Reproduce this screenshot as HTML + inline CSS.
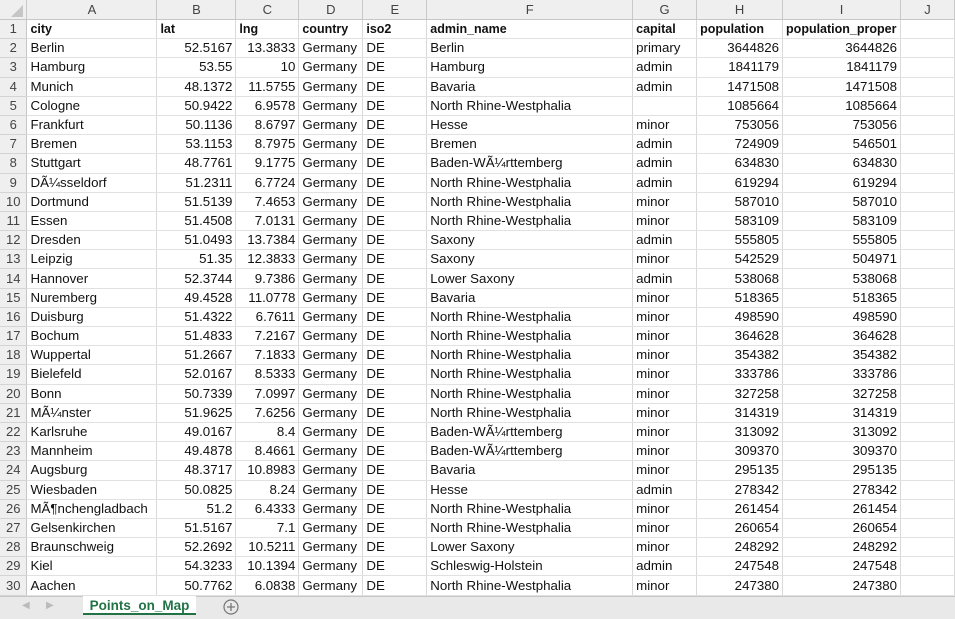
<!DOCTYPE html>
<html><head><meta charset="utf-8"><style>
html,body{margin:0;padding:0;width:955px;height:618px;overflow:hidden;background:#fff;font-family:"Liberation Sans",sans-serif;}
table{border-collapse:collapse;table-layout:fixed;position:absolute;left:0;top:0;}
td{height:18.2px;padding:0 3px;border-right:1px solid #d9d9d9;border-bottom:1px solid #e1e1e1;font-size:13.3px;color:#111;white-space:nowrap;overflow:hidden;line-height:18px;}
td.n{text-align:right;}
tr.h td{height:19px;background:#efefef;color:#444;text-align:center;border-right:1px solid #c9c9c9;border-bottom:1px solid #c6c6c6;font-size:13px;}
td.r{background:#efefef;color:#444;text-align:center;border-right:1px solid #c6c6c6;border-bottom:1px solid #d4d4d4;padding:0;font-size:13px;}
tr.b td{font-weight:bold;font-size:12.5px;}
tr.b td.r{font-weight:normal;font-size:13px;}
#bar{position:absolute;left:0;top:596px;width:955px;height:22px;background:#e9e9e9;border-top:1px solid #c6c6c6;}
#tab{position:absolute;left:83px;top:596px;width:113px;height:19px;background:#fff;border-bottom:2px solid #217346;color:#217346;font-weight:bold;font-size:13.5px;text-align:center;line-height:19px;box-sizing:border-box;}
</style></head><body>
<table>
<colgroup><col style="width:27px"><col style="width:130px"><col style="width:79px"><col style="width:63px"><col style="width:64px"><col style="width:64px"><col style="width:206px"><col style="width:64px"><col style="width:86px"><col style="width:118px"><col style="width:54px"></colgroup>
<tr class="h"><td style="background:#efefef"></td><td>A</td><td>B</td><td>C</td><td>D</td><td>E</td><td>F</td><td>G</td><td>H</td><td>I</td><td>J</td></tr>
<tr class="b"><td class="r">1</td><td>city</td><td>lat</td><td>lng</td><td>country</td><td>iso2</td><td>admin_name</td><td>capital</td><td>population</td><td>population_proper</td><td></td></tr>
<tr><td class="r">2</td><td>Berlin</td><td class="n">52.5167</td><td class="n">13.3833</td><td>Germany</td><td>DE</td><td>Berlin</td><td>primary</td><td class="n">3644826</td><td class="n">3644826</td><td></td></tr>
<tr><td class="r">3</td><td>Hamburg</td><td class="n">53.55</td><td class="n">10</td><td>Germany</td><td>DE</td><td>Hamburg</td><td>admin</td><td class="n">1841179</td><td class="n">1841179</td><td></td></tr>
<tr><td class="r">4</td><td>Munich</td><td class="n">48.1372</td><td class="n">11.5755</td><td>Germany</td><td>DE</td><td>Bavaria</td><td>admin</td><td class="n">1471508</td><td class="n">1471508</td><td></td></tr>
<tr><td class="r">5</td><td>Cologne</td><td class="n">50.9422</td><td class="n">6.9578</td><td>Germany</td><td>DE</td><td>North Rhine-Westphalia</td><td></td><td class="n">1085664</td><td class="n">1085664</td><td></td></tr>
<tr><td class="r">6</td><td>Frankfurt</td><td class="n">50.1136</td><td class="n">8.6797</td><td>Germany</td><td>DE</td><td>Hesse</td><td>minor</td><td class="n">753056</td><td class="n">753056</td><td></td></tr>
<tr><td class="r">7</td><td>Bremen</td><td class="n">53.1153</td><td class="n">8.7975</td><td>Germany</td><td>DE</td><td>Bremen</td><td>admin</td><td class="n">724909</td><td class="n">546501</td><td></td></tr>
<tr><td class="r">8</td><td>Stuttgart</td><td class="n">48.7761</td><td class="n">9.1775</td><td>Germany</td><td>DE</td><td>Baden-WÃ¼rttemberg</td><td>admin</td><td class="n">634830</td><td class="n">634830</td><td></td></tr>
<tr><td class="r">9</td><td>DÃ¼sseldorf</td><td class="n">51.2311</td><td class="n">6.7724</td><td>Germany</td><td>DE</td><td>North Rhine-Westphalia</td><td>admin</td><td class="n">619294</td><td class="n">619294</td><td></td></tr>
<tr><td class="r">10</td><td>Dortmund</td><td class="n">51.5139</td><td class="n">7.4653</td><td>Germany</td><td>DE</td><td>North Rhine-Westphalia</td><td>minor</td><td class="n">587010</td><td class="n">587010</td><td></td></tr>
<tr><td class="r">11</td><td>Essen</td><td class="n">51.4508</td><td class="n">7.0131</td><td>Germany</td><td>DE</td><td>North Rhine-Westphalia</td><td>minor</td><td class="n">583109</td><td class="n">583109</td><td></td></tr>
<tr><td class="r">12</td><td>Dresden</td><td class="n">51.0493</td><td class="n">13.7384</td><td>Germany</td><td>DE</td><td>Saxony</td><td>admin</td><td class="n">555805</td><td class="n">555805</td><td></td></tr>
<tr><td class="r">13</td><td>Leipzig</td><td class="n">51.35</td><td class="n">12.3833</td><td>Germany</td><td>DE</td><td>Saxony</td><td>minor</td><td class="n">542529</td><td class="n">504971</td><td></td></tr>
<tr><td class="r">14</td><td>Hannover</td><td class="n">52.3744</td><td class="n">9.7386</td><td>Germany</td><td>DE</td><td>Lower Saxony</td><td>admin</td><td class="n">538068</td><td class="n">538068</td><td></td></tr>
<tr><td class="r">15</td><td>Nuremberg</td><td class="n">49.4528</td><td class="n">11.0778</td><td>Germany</td><td>DE</td><td>Bavaria</td><td>minor</td><td class="n">518365</td><td class="n">518365</td><td></td></tr>
<tr><td class="r">16</td><td>Duisburg</td><td class="n">51.4322</td><td class="n">6.7611</td><td>Germany</td><td>DE</td><td>North Rhine-Westphalia</td><td>minor</td><td class="n">498590</td><td class="n">498590</td><td></td></tr>
<tr><td class="r">17</td><td>Bochum</td><td class="n">51.4833</td><td class="n">7.2167</td><td>Germany</td><td>DE</td><td>North Rhine-Westphalia</td><td>minor</td><td class="n">364628</td><td class="n">364628</td><td></td></tr>
<tr><td class="r">18</td><td>Wuppertal</td><td class="n">51.2667</td><td class="n">7.1833</td><td>Germany</td><td>DE</td><td>North Rhine-Westphalia</td><td>minor</td><td class="n">354382</td><td class="n">354382</td><td></td></tr>
<tr><td class="r">19</td><td>Bielefeld</td><td class="n">52.0167</td><td class="n">8.5333</td><td>Germany</td><td>DE</td><td>North Rhine-Westphalia</td><td>minor</td><td class="n">333786</td><td class="n">333786</td><td></td></tr>
<tr><td class="r">20</td><td>Bonn</td><td class="n">50.7339</td><td class="n">7.0997</td><td>Germany</td><td>DE</td><td>North Rhine-Westphalia</td><td>minor</td><td class="n">327258</td><td class="n">327258</td><td></td></tr>
<tr><td class="r">21</td><td>MÃ¼nster</td><td class="n">51.9625</td><td class="n">7.6256</td><td>Germany</td><td>DE</td><td>North Rhine-Westphalia</td><td>minor</td><td class="n">314319</td><td class="n">314319</td><td></td></tr>
<tr><td class="r">22</td><td>Karlsruhe</td><td class="n">49.0167</td><td class="n">8.4</td><td>Germany</td><td>DE</td><td>Baden-WÃ¼rttemberg</td><td>minor</td><td class="n">313092</td><td class="n">313092</td><td></td></tr>
<tr><td class="r">23</td><td>Mannheim</td><td class="n">49.4878</td><td class="n">8.4661</td><td>Germany</td><td>DE</td><td>Baden-WÃ¼rttemberg</td><td>minor</td><td class="n">309370</td><td class="n">309370</td><td></td></tr>
<tr><td class="r">24</td><td>Augsburg</td><td class="n">48.3717</td><td class="n">10.8983</td><td>Germany</td><td>DE</td><td>Bavaria</td><td>minor</td><td class="n">295135</td><td class="n">295135</td><td></td></tr>
<tr><td class="r">25</td><td>Wiesbaden</td><td class="n">50.0825</td><td class="n">8.24</td><td>Germany</td><td>DE</td><td>Hesse</td><td>admin</td><td class="n">278342</td><td class="n">278342</td><td></td></tr>
<tr><td class="r">26</td><td>MÃ¶nchengladbach</td><td class="n">51.2</td><td class="n">6.4333</td><td>Germany</td><td>DE</td><td>North Rhine-Westphalia</td><td>minor</td><td class="n">261454</td><td class="n">261454</td><td></td></tr>
<tr><td class="r">27</td><td>Gelsenkirchen</td><td class="n">51.5167</td><td class="n">7.1</td><td>Germany</td><td>DE</td><td>North Rhine-Westphalia</td><td>minor</td><td class="n">260654</td><td class="n">260654</td><td></td></tr>
<tr><td class="r">28</td><td>Braunschweig</td><td class="n">52.2692</td><td class="n">10.5211</td><td>Germany</td><td>DE</td><td>Lower Saxony</td><td>minor</td><td class="n">248292</td><td class="n">248292</td><td></td></tr>
<tr><td class="r">29</td><td>Kiel</td><td class="n">54.3233</td><td class="n">10.1394</td><td>Germany</td><td>DE</td><td>Schleswig-Holstein</td><td>admin</td><td class="n">247548</td><td class="n">247548</td><td></td></tr>
<tr><td class="r">30</td><td>Aachen</td><td class="n">50.7762</td><td class="n">6.0838</td><td>Germany</td><td>DE</td><td>North Rhine-Westphalia</td><td>minor</td><td class="n">247380</td><td class="n">247380</td><td></td></tr>
</table>
<svg style="position:absolute;left:0;top:0" width="27" height="20"><polygon points="23,5 23,17 11,17" fill="#c6c6c6"/></svg>
<div id="bar"></div>
<div style="position:absolute;left:22px;top:600px;color:#bbb;font-size:10px">&#9664;</div>
<div style="position:absolute;left:46px;top:600px;color:#bbb;font-size:10px">&#9654;</div>
<div id="tab">Points_on_Map</div>
<svg style="position:absolute;left:222px;top:598px" width="18" height="18"><circle cx="9" cy="9" r="7" fill="none" stroke="#777" stroke-width="1.2"/><path d="M9 5v8M5 9h8" stroke="#777" stroke-width="1.3"/></svg>
</body></html>
